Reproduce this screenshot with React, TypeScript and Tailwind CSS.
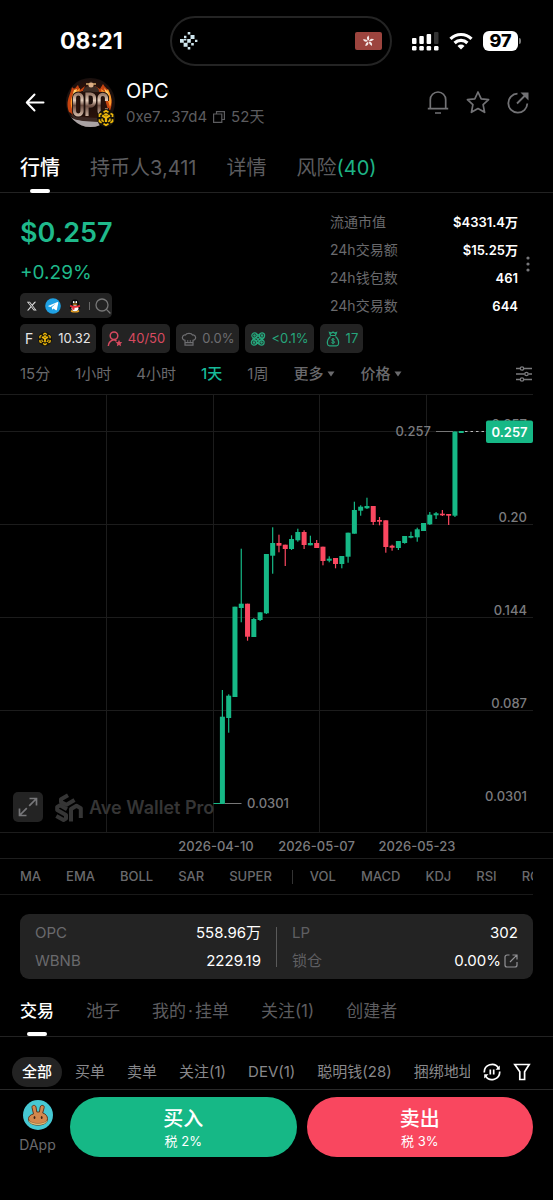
import type { ReactNode } from 'react';

type Tone = 'up' | 'down';
// tone, high, body top, body bottom, low
type Candle = [Tone, number, number, number, number];

const candles: Candle[] = [
  ['up', 690, 716.7, 804, 804],
  ['up', 694.3, 695.7, 718, 732.7],
  ['up', 606.7, 606.7, 697, 697],
  ['up', 548.7, 603.7, 608, 622.3],
  ['down', 603.7, 603.7, 636.7, 640.7],
  ['up', 618, 619, 637, 637],
  ['up', 612.3, 612.3, 620, 621],
  ['up', 554, 554, 613.3, 614],
  ['up', 527.3, 543, 555.7, 573.7],
  ['down', 534.7, 543, 545.7, 552.3],
  ['down', 544.7, 544.7, 549, 566],
  ['up', 535.3, 539, 549, 550],
  ['up', 528.7, 532, 540.3, 541.7],
  ['down', 530.3, 532, 545, 549],
  ['up', 535.7, 543, 545.3, 545.3],
  ['down', 540, 543, 548, 548],
  ['down', 546.7, 546.7, 561, 565.3],
  ['up', 556.3, 558.7, 560.7, 562.3],
  ['down', 558, 558, 564, 568.3],
  ['up', 556, 556, 564, 568.3],
  ['up', 532.7, 532.7, 556.7, 562.7],
  ['up', 501.7, 510, 533.7, 533.7],
  ['up', 505.3, 506.7, 510.7, 515.7],
  ['up', 497.7, 506, 508.3, 509],
  ['down', 506, 506, 522, 525],
  ['down', 517, 520, 521.7, 525.3],
  ['down', 520.3, 520.3, 547, 552.7],
  ['down', 544.7, 545.7, 547.7, 550.7],
  ['up', 541, 541, 548, 550],
  ['up', 536, 536, 543, 543.7],
  ['up', 531.7, 536, 537.7, 538.3],
  ['up', 527.7, 529.3, 537.3, 541.7],
  ['up', 523, 523, 531, 531],
  ['up', 512, 514.7, 524.3, 525],
  ['up', 512, 513.3, 515.3, 519],
  ['down', 510, 513.7, 515.3, 516],
  ['down', 514, 514, 515.7, 525],
  ['up', 431.5, 431.5, 515.7, 517],
  ['up', 431, 431, 433, 433],
];

const toneColor = { up: '#16b886', down: '#fb4760' };

function Chart() {
  return (
    <svg viewBox="0 394 553 464" className="block w-full" role="img" aria-label="OPC" fontFamily="Inter, sans-serif" fontSize="13" fontWeight="500">
      <g stroke="#1c1c1c" strokeWidth="1">
        {[394.5, 431.5, 524.5, 617.5, 710.5].map((y) => (
          <line key={y} x1="0" x2="533" y1={y} y2={y} />
        ))}
        <line x1="0" x2="553" y1="832.5" y2="832.5" />
        {[106.5, 213.5, 319.5, 426.5].map((x) => (
          <line key={x} x1={x} x2={x} y1="394" y2="832" />
        ))}
      </g>
      <g fill="#353535">
        <g stroke="#353535" strokeWidth="4" fill="none" strokeLinejoin="round">
          <path d="M68 795.300L61 799.300v2.800l5.500 2.600 8-4.700" />
          <path d="M67 809.300L60 805.300l-2.800 1.600v3.200l8.800 4.900v3.600l-2.500 1.500-7.200-4" />
          <path d="M71 821.500V809l5.500-3.300 4.300 2.500V818" />
        </g>
        <text x="89" y="814" fontSize="18" fontWeight="600">Ave Wallet Pro</text>
      </g>
      {candles.map(([tone, high, top, bottom, low], i) => {
        const x = 222.4 + i * 6.285;
        return (
          <g key={i} fill={toneColor[tone]}>
            <rect x={x - 0.6} y={high} width="1.2" height={low - high} />
            <rect x={x - 2.5} y={top} width="5" height={bottom - top} />
          </g>
        );
      })}
      <path d="M213.500 803.500h7" stroke="#16b886" />
      <path d="M225 803.500h16.500M436 431.500h17" stroke="#777" />
      <path d="M465 431.500h22" stroke="#bbb" strokeDasharray="2.500 3" />
      <g fill="#7b7b7e">
        <text x="247" y="808">0.0301</text>
        <text x="395.500" y="436">0.257</text>
        <g textAnchor="end">
          <text x="527" y="429">0.257</text>
          <text x="527" y="522">0.20</text>
          <text x="527" y="615">0.144</text>
          <text x="527" y="708">0.087</text>
          <text x="527" y="801">0.0301</text>
        </g>
        <g textAnchor="middle">
          <text x="216" y="851">2026-04-10</text>
          <text x="316.500" y="851">2026-05-07</text>
          <text x="417" y="851">2026-05-23</text>
        </g>
      </g>
      <rect x="486" y="420.500" width="47" height="22.500" rx="2" fill="#16b886" />
      <text x="509.500" y="437" textAnchor="middle" fill="#fff" fontWeight="600">0.257</text>
    </svg>
  );
}

function BnbMark({ className }: { className: string }) {
  return (
    <svg viewBox="0 0 16 16" className={className} aria-hidden="true">
      <circle cx="8" cy="8" r="8" fill="#15130b" />
      <g fill="none" stroke="#efb90b" strokeWidth="1.500">
        <path d="M5.800 2.800L8 1.500l2.200 1.300M12 3.900l1.800 1v2.300M13.800 9v2.200l-1.900 1.100M10.200 13.200L8 14.500l-2.200-1.300M4.100 12.300l-1.900-1.100V9M2.200 7.200V4.900L4 3.900" />
        <path d="M4.600 5.800L8 7.700l3.400-1.900M8 7.700v3.900" strokeWidth="2" />
        <path d="M8 3.700l2 1.200-2 1.100-2-1.100z" fill="#efb90b" strokeWidth=".4" />
        <path d="M4.500 8.500v1.700l1.600 1M11.500 8.500v1.700l-1.600 1" strokeWidth="1.300" />
      </g>
    </svg>
  );
}

function Avatar() {
  return (
    <div className="relative size-[49px] shrink-0">
      <svg viewBox="0 0 49 49" className="size-full" aria-hidden="true">
        <defs>
          <clipPath id="coin"><circle cx="24.500" cy="24.500" r="24.500" /></clipPath>
          <linearGradient id="steel" x1="0" x2="0" y1="0" y2="1">
            <stop offset="0" stopColor="#9b7c6b" />
            <stop offset=".3" stopColor="#e4cdbb" />
            <stop offset=".55" stopColor="#6a4b3f" />
            <stop offset="1" stopColor="#cbb1a0" />
          </linearGradient>
          <radialGradient id="glow">
            <stop offset="0" stopColor="#1b0d09" />
            <stop offset=".7" stopColor="#2b120b" />
            <stop offset="1" stopColor="#19100e" />
          </radialGradient>
        </defs>
        <g clipPath="url(#coin)">
          <rect width="49" height="49" fill="url(#glow)" />
          <path d="M3 34C-1 24 4 18 6 9c3 3 3 1 6-2l2 5 5-4-2 5 14 0-2-5 5 3 3-5c2 4 5 4 6 9 3 6 4 12 0 20l-3-10-2-10-8-2H16l-8 4-2 10 2 12-3-4z" fill="#c5430f" />
          <path d="M6 31c-3-8 0-12 2-18 2 1 5-2 6-3l-1 5-5 4-1 9zM35 11l4 3 3-3c3 6 5 12 2 18l-3-9-5-5z" fill="#ff9a2a" />
          <path d="M8 12l3-1-1 4-4 5zM38 10l4 4 1 5-3-4z" fill="#ffd06a" />
          <path d="M5 37l5-2 6 4 16 1 7 4-5 6H15z" fill="#3b2823" />
          <path d="M3 38c5 4 9 4 14 5l15 1 3 7H14z" fill="#aaa3a4" />
          <path d="M17 14c0-4 3-5 5-6 0-6 6-6 6 0 3 1 5 2 5 6z" fill="#3d2c24" />
          <path d="M20 5h10v2H20z" fill="#a98352" />
          <circle cx="25" cy="7" r="2.500" fill="#dcae86" />
          <g fill="none" strokeWidth="5" stroke="#1d0f0b">
            <rect x="8.500" y="16" width="7.500" height="21" rx="3.700" />
            <path d="M21 38V16h3.500a4 4 0 0 1 4 4v4a4 4 0 0 1-4 4H21" />
            <path d="M40.500 23v-3a3.700 3.700 0 0 0-7.400 0v13a3.700 3.700 0 0 0 7.400 0v-3" />
          </g>
          <g fill="none" strokeWidth="3.200" stroke="url(#steel)">
            <rect x="8.500" y="16" width="7.500" height="21" rx="3.700" />
            <path d="M21 38V16h3.500a4 4 0 0 1 4 4v4a4 4 0 0 1-4 4H21" />
            <path d="M40.500 23v-3a3.700 3.700 0 0 0-7.400 0v13a3.700 3.700 0 0 0 7.400 0v-3" />
          </g>
        </g>
      </svg>
      <BnbMark className="absolute right-0 bottom-0 size-[18px]" />
    </div>
  );
}

function StatusBar() {
  return (
    <div className="flex h-[66px] items-end pr-8 pl-[60px]">
      <div className="flex h-[50px] flex-1 items-center text-[23px] font-bold">08:21</div>
      <div className="flex h-[50px] w-[222px] items-center justify-between rounded-full border-2 border-[#242424] px-2">
        <svg viewBox="0 0 18 18" className="size-[18px]" fill="#cfe6ee" aria-hidden="true">
          <path d="M7.700 0h2.600v2.600H7.700zM4 3.800h2.400v2.400H4zM10.500 2.900h4v4h-4zM0 7h3.800v3.800H0zM7.200 7h3.600v3.800H7.200zM15 7.700h2.400v2.400H15zM3.600 10.800h4v4h-4zM11.200 11h2.600v2.600h-2.600zM7.700 15h2.600v2.600H7.700zM4 7h2.400v1.600H4z" />
        </svg>
        <svg viewBox="0 0 27 18" className="h-[18px] w-[27px]" aria-hidden="true">
          <rect width="27" height="18" rx="2" fill="#9c443e" />
          <g fill="#f5e9e8">
            {[0, 72, 144, 216, 288].map((a) => (
              <path key={a} d="M13.500 8.600c-2-1.200-2.200-4 .3-5.200-.5 1.500 1.400 2.500-.3 5.200z" transform={`rotate(${a} 13.500 9.200)`} />
            ))}
          </g>
        </svg>
      </div>
      <div className="ml-5 flex h-[50px] items-center gap-[10px]">
        <svg viewBox="0 0 27 19" className="h-[19px] w-[27px]" fill="#fff" aria-hidden="true">
          <rect x="0" y="6" width="4.500" height="6" rx="1" />
          <rect x="7.300" y="4" width="4.500" height="8" rx="1" />
          <rect x="14.600" y="2" width="4.500" height="10" rx="1" />
          <rect x="22" y="0" width="4.500" height="12" rx="1" fill="#333" />
          <rect x="0" y="14" width="4.500" height="4.500" rx="1.200" />
          <rect x="7.300" y="14" width="4.500" height="4.500" rx="1.200" />
          <rect x="14.600" y="14" width="4.500" height="4.500" rx="1.200" />
          <rect x="22" y="14" width="4.500" height="4.500" rx="1.200" />
        </svg>
        <svg viewBox="0 0 24 18" className="h-[18px] w-6" fill="none" stroke="#fff" strokeWidth="3.200" aria-hidden="true">
          <path d="M1.500 6.800a15 15 0 0 1 21 0M5.600 11a9.200 9.200 0 0 1 12.800 0" />
          <path d="M8.500 14a5 5 0 0 1 7 0L12 17.600z" fill="#fff" stroke="none" />
        </svg>
        <div className="flex items-center gap-px">
          <div className="flex h-5 w-[35px] items-center justify-center rounded-md bg-white text-lg leading-5 font-extrabold text-black">97</div>
          <div className="h-[6px] w-[2px] rounded-r-full bg-[#777]" />
        </div>
      </div>
    </div>
  );
}

function Header() {
  return (
    <header className="flex h-[73px] items-center pr-[23px] pl-6">
      <button aria-label="Back" className="mr-[18px]">
        <svg viewBox="0 0 24 24" className="size-6" fill="none" stroke="#fff" strokeWidth="2" strokeLinejoin="round" strokeLinecap="round">
          <path d="M19.500 11.500H3M10.500 3.500L2.800 11.500l7.700 8" />
        </svg>
      </button>
      <Avatar />
      <div className="ml-[11px] flex-1">
        <h1 className="text-xl leading-7">OPC</h1>
        <div className="flex items-center gap-[6px] text-[15px] leading-6 text-[#5c5c5f]">
          <span>0xe7...37d4</span>
          <button aria-label="Copy">
            <svg viewBox="0 0 12 12" className="size-3" fill="none" stroke="currentColor" strokeWidth="1.200">
              <path d="M3.500 3V.6h7.900v7.900H9M.6 3h8.200v8.400H.6z" />
            </svg>
          </button>
          <span>52天</span>
        </div>
      </div>
      <div className="flex items-center gap-4 text-[#727275]">
        <button aria-label="Alerts">
          <svg viewBox="0 0 24 24" className="size-6" fill="none" stroke="currentColor" strokeWidth="1.700">
            <path d="M4.300 17.700V8.700a7.700 7.700 0 0 1 15.400 0v9M1.800 17.700h20.400M9 22h6" />
          </svg>
        </button>
        <button aria-label="Favourite">
          <svg viewBox="0 0 24 24" className="size-6" fill="none" stroke="currentColor" strokeWidth="1.700" strokeLinejoin="round">
            <path d="M12 1l3.200 6.800 7.400.9-5.500 5 1.500 7.600-6.600-3.800-6.600 3.800 1.500-7.600-5.500-5 7.400-.9z" />
          </svg>
        </button>
        <button aria-label="Share">
          <svg viewBox="0 0 24 24" className="size-6" fill="none" stroke="currentColor" strokeWidth="1.800">
            <path d="M11.500 2.700A9.500 9.500 0 1 0 21.300 12.500M11 12.500L19 4.500" />
            <path d="M14.500 1.500h8v8z" fill="currentColor" stroke="none" />
          </svg>
        </button>
      </div>
    </header>
  );
}

function TopTabs() {
  return (
    <nav className="flex h-[54px] items-stretch gap-[30px] border-b border-[#222] px-5 text-xl text-[#5c5c5f]">
      <button className="relative pt-1 font-medium text-white">
        行情
        <span className="absolute -bottom-px left-1/2 h-1 w-5 -translate-x-1/2 rounded-sm bg-white" />
      </button>
      <button className="pt-1">持币人3,411</button>
      <button className="pt-1">详情</button>
      <button className="pt-1">风险<span className="text-[#1eb385]">(40)</span></button>
    </nav>
  );
}

const stats = [
  ['流通市值', '$4331.4万'],
  ['24h交易额', '$15.25万'],
  ['24h钱包数', '461'],
  ['24h交易数', '644'],
];

function Socials() {
  return (
    <div className="flex h-[25px] w-[92px] items-center gap-2 rounded-[5px] bg-[#232323] pr-1 pl-[7px]">
      <a href="#x" aria-label="X">
        <svg viewBox="0 0 24 24" className="size-[10px]" fill="#ddd">
          <path d="M18.200 1.500h3.700l-8 9.200L23.300 22.500H16l-5.800-7.500-6.600 7.500H0l8.600-9.800L-.5 1.500H7l5.200 6.900zM17 20.300h2L5.800 3.600H3.600z" />
        </svg>
      </a>
      <a href="#telegram" aria-label="Telegram">
        <svg viewBox="0 0 16 16" className="size-4">
          <circle cx="8" cy="8" r="7.800" fill="#1fa1e4" />
          <path d="M3 7.900l9.600-3.900c.5-.1.800.2.700.8l-1.500 7.100c-.1.500-.5.600-.9.300L8.500 10.500l-1.200 1.200-.6-2.500 4.200-3.700-5.400 3.400-2.300-.7c-.5-.2-.5-.2-.2-.3z" fill="#fff" />
        </svg>
      </a>
      <a href="#qq" aria-label="QQ">
        <svg viewBox="0 0 14 16" className="h-4 w-3">
          <ellipse cx="7" cy="14" rx="5" ry="1.600" fill="#eca01c" />
          <path d="M7 .5c3.500 0 4.500 2.500 4.500 5.500 1 1.500 2 3.500 1.500 5.500-.5.500-1-.5-1.500-1-1 3-2 3.500-4.500 3.500S3.500 13.500 2.500 10.500c-.5.500-1 1.500-1.500 1C.500 9.500 1.500 7.500 2.500 6 2.500 3 3.500.5 7 .5z" fill="#080808" />
          <ellipse cx="7" cy="10.700" rx="4" ry="3.500" fill="#fff" />
          <ellipse cx="5.500" cy="3.600" rx="1" ry="1.300" fill="#fff" /><ellipse cx="8.500" cy="3.600" rx="1" ry="1.300" fill="#fff" />
          <ellipse cx="7" cy="5.800" rx="3" ry=".8" fill="#eca01c" />
          <path d="M1.500 6.500c3.500 2 7.500 2 11 0l.5 2.300c-2 1-4.500 1.200-6.500 1.200l-.2 2.500H3.700l.2-2.600-2.800-1z" fill="#e42b35" />
        </svg>
      </a>
      <div className="flex items-center gap-[5px]">
        <span className="h-2 w-px bg-[#666]" />
        <button aria-label="Search">
          <svg viewBox="0 0 16 16" className="size-4" fill="none" stroke="#777" strokeWidth="1.300" strokeLinecap="round">
            <circle cx="7" cy="7" r="6" /><path d="M11.400 11.400l3.600 3.600" />
          </svg>
        </button>
      </div>
    </div>
  );
}

function Chip({ children, tone }: { children: ReactNode; tone: string }) {
  return (
    <button className={`flex h-[29px] items-center gap-[5px] rounded-[5px] bg-[#232323] px-[5px] text-[13px] whitespace-nowrap ${tone}`}>
      {children}
    </button>
  );
}

function Overview() {
  return (
    <section className="px-5 pt-[15px]">
      <div className="flex justify-between">
        <div>
          <div className="text-[27px] leading-[50px] font-semibold text-[#1fb98b]">$0.257</div>
          <div className="mb-[5px] text-[19px] leading-[30px] text-[#1fb98b]">+0.29%</div>
          <Socials />
        </div>
        <div className="flex items-center gap-2">
          <dl className="w-[188px] leading-7">
            {stats.map(([label, value]) => (
              <div key={label} className="flex justify-between">
                <dt className="text-sm leading-7 text-[#6a6a6d]">{label}</dt>
                <dd className="text-[13px] leading-7 font-semibold text-white">{value}</dd>
              </div>
            ))}
          </dl>
          <button aria-label="More" className="mr-[3px]">
            <svg viewBox="0 0 4 16" className="h-4 w-1" fill="#77777a">
              <circle cx="2" cy="2" r="1.600" /><circle cx="2" cy="8" r="1.600" /><circle cx="2" cy="14" r="1.600" />
            </svg>
          </button>
        </div>
      </div>
      <div className="mt-1 flex gap-[6px]">
        <Chip tone="text-[#e6e6e6]">
          <span className="text-sm">F</span> <BnbMark className="size-[14px]" /> <span className="ml-px">10.32</span>
        </Chip>
        <Chip tone="text-[#d84a60]">
          <svg viewBox="0 0 16 16" className="size-4" fill="none" stroke="currentColor" strokeWidth="1.500" aria-hidden="true">
            <circle cx="7" cy="4.700" r="3.800" /><path d="M1.300 15c.2-3.500 2-5.500 5.500-6.300M7 8.500l2.500 1.600" />
            <path d="M12 8.800l1 2.100 2.300.3-1.700 1.600.4 2.400-2-1.200-2.100 1.200.4-2.400-1.700-1.600 2.400-.3z" fill="currentColor" stroke="none" />
          </svg>
          40/50
        </Chip>
        <Chip tone="text-[#6e6e71]">
          <svg viewBox="0 0 16 16" className="size-4" fill="none" stroke="currentColor" strokeWidth="1.200" aria-hidden="true">
            <path d="M4 14.200V9.300C1.500 9 .8 6.800 1.800 5.200c.7-1 1.800-1.400 2.700-1.200C5.500 1.800 10.500 1.800 11.500 4c.9-.2 2 .2 2.700 1.200 1 1.600.3 3.800-2.200 4.100v4.900zM4 11.700h8M6.700 9.300v1.500M9.300 9.300v1.500" />
          </svg>
          0.0%
        </Chip>
        <Chip tone="text-[#26a67c]">
          <svg viewBox="0 0 16 16" className="size-4" fill="none" stroke="currentColor" strokeWidth="1.200" aria-hidden="true">
            <g transform="rotate(8 8 8)">
              <circle cx="4" cy="5" r="2.600" /><circle cx="4" cy="5" r=".7" />
              <circle cx="4.500" cy="12" r="2.600" /><circle cx="4.500" cy="12" r=".7" />
              <circle cx="11.500" cy="4" r="2.600" /><circle cx="11.500" cy="4" r=".7" />
              <circle cx="12" cy="11" r="2.600" /><circle cx="12" cy="11" r=".7" />
              <path d="M5.500 2.800l8 6.200M2.500 7.500l8 6M2.500 10L10 2M6.500 13.800L14 5.700M6 6.800l4 3.200M6.500 10.200L10 6" />
            </g>
          </svg>
          &lt;0.1%
        </Chip>
        <Chip tone="text-[#26a67c]">
          <svg viewBox="0 0 16 16" className="size-4" fill="none" stroke="currentColor" strokeWidth="1.200" aria-hidden="true">
            <path d="M5.500 4.200L4.500 1.500l2 .6L8 1l1.500 1.100 2-.6-1 2.700M5.300 4.500h5.400M5.500 5.500C3 7.500 2 10 2.500 13c.2 1.300 1 1.800 2.200 1.800h6.600c1.200 0 2-.5 2.200-1.800.5-3-.5-5.500-3-7.500" />
            <path d="M9.600 8.400c-.5-.8-3-.9-3 .5s3 .8 3 2.200-2.500 1.300-3.200.4M8 7v6.200" strokeWidth="1" />
          </svg>
          17
        </Chip>
      </div>
    </section>
  );
}

function Caret() {
  return (
    <svg viewBox="0 0 8 6" className="h-[6px] w-2" fill="currentColor" aria-hidden="true"><path d="M.5.5h7L4 5.500z" /></svg>
  );
}

function Timeframes() {
  return (
    <div className="flex h-[41px] items-center gap-[25px] px-5 pt-px text-[15px] whitespace-nowrap text-[#6a6a6d]">
      <button>15分</button>
      <button>1小时</button>
      <button>4小时</button>
      <button className="font-medium text-[#17b999]">1天</button>
      <button>1周</button>
      <button className="flex items-center gap-1 font-medium">更多 <Caret /></button>
      <button className="flex items-center gap-1 font-medium">价格 <Caret /></button>
      <button aria-label="Settings" className="ml-auto">
        <svg viewBox="0 0 18 16" className="h-4 w-[18px]" fill="none" stroke="#7b7b7e" strokeWidth="1.300">
          <path d="M1 2.500h4M9 2.500h8M1 8h8.500M13.500 8H17M1 13.500h4M9 13.500h8" />
          <circle cx="7" cy="2.500" r="1.700" /><circle cx="11.500" cy="8" r="1.700" /><circle cx="7" cy="13.500" r="1.700" />
        </svg>
      </button>
    </div>
  );
}

function Indicators() {
  return (
    <div className="border-t border-[#1e1e1e]">
      <div className="mr-5 flex h-9 items-center gap-[25px] overflow-hidden border-b border-[#191919] pt-px pl-5 text-[13px] font-medium whitespace-nowrap text-[#6a6a6d]">
        {['MA', 'EMA', 'BOLL', 'SAR', 'SUPER'].map((n) => <button key={n}>{n}</button>)}
        <span className="-mr-2 -ml-[5px] h-[14px] w-px shrink-0 bg-[#333]" />
        {['VOL', 'MACD', 'KDJ', 'RSI', 'ROC'].map((n) => <button key={n}>{n}</button>)}
      </div>
    </div>
  );
}

function PoolCard() {
  return (
    <section className="mx-5 mt-[19px] flex h-[65px] items-center gap-[15px] rounded-[9px] bg-[#232323] px-[15px] text-[15px] leading-7">
      <dl className="flex-1">
        <div className="flex justify-between"><dt className="text-[#6a6a6d]">OPC</dt><dd>558.96万</dd></div>
        <div className="flex justify-between"><dt className="text-[#6a6a6d]">WBNB</dt><dd>2229.19</dd></div>
      </dl>
      <span className="h-10 w-px bg-[#5a5a5a]" />
      <dl className="flex-1">
        <div className="flex justify-between"><dt className="text-[#5f5f62]">LP</dt><dd>302</dd></div>
        <div className="flex justify-between">
          <dt className="text-[#5f5f62]">锁仓</dt>
          <dd className="flex items-center gap-[3px]">
            0.00%
            <a href="#lock" aria-label="Lock details">
              <svg viewBox="0 0 14 14" className="size-[14px]" fill="none" stroke="#929295" strokeWidth="1.200">
                <path d="M5.500 1H3a2 2 0 0 0-2 2v8a2 2 0 0 0 2 2h8a2 2 0 0 0 2-2V8M8.500 1H13v4.500M12.800 1.200L6 8" />
              </svg>
            </a>
          </dd>
        </div>
      </dl>
    </section>
  );
}

function BottomTabs() {
  return (
    <nav className="flex h-[58px] items-stretch gap-8 border-b border-[#222] px-5 pt-[9px] text-[17px] whitespace-nowrap text-[#5c5c5f]">
      <button className="relative font-medium text-white">
        交易
        <span className="absolute bottom-0 left-1/2 h-1 w-5 -translate-x-1/2 rounded-sm bg-white" />
      </button>
      <button>池子</button>
      <button>我的<span className="mx-[2px]">·</span>挂单</button>
      <button>关注(1)</button>
      <button>创建者</button>
    </nav>
  );
}

function Filters() {
  return (
    <div className="flex h-[53px] items-end gap-[13px] border-b border-[#292929] pr-[22px] pb-[2px] pl-3">
      <div className="flex min-w-0 flex-1 items-center gap-[22px] overflow-hidden text-[15px] whitespace-nowrap text-[#88888b]">
        <button className="-mr-[9px] h-[30px] shrink-0 rounded-full bg-[#232323] px-[10px] font-medium text-white">全部</button>
        {['买单', '卖单', '关注(1)', 'DEV(1)', '聪明钱(28)', '捆绑地址'].map((n) => <button key={n}>{n}</button>)}
      </div>
      <div className="flex h-[30px] items-center gap-3">
        <button aria-label="Pause updates">
          <svg viewBox="0 0 18 18" className="size-[18px]" fill="none" stroke="#fff" strokeWidth="1.700">
            <path d="M1.300 9.500A7.700 7.700 0 0 1 15.500 5M16.700 8.500A7.700 7.700 0 0 1 2.500 13M7.300 6.500v5M10.700 6.500v5" />
            <path d="M16.800 2.500v4.300h-4.300zM1.200 15.500v-4.300h4.300z" fill="#fff" stroke="none" />
          </svg>
        </button>
        <button aria-label="Filter">
          <svg viewBox="0 0 18 18" className="size-[18px]" fill="none" stroke="#fff" strokeWidth="1.700">
            <path d="M1.800 1.500h14.400l-4.600 7.300v7.700H6.800V8.800z" />
          </svg>
        </button>
      </div>
    </div>
  );
}

function TradeBar() {
  return (
    <footer className="flex items-start gap-[10px] pt-[7px] pr-5 pl-[14px] text-white">
      <a href="#dapp" className="-mr-px flex w-[47px] flex-col items-center pt-[3px] text-sm leading-[30px] text-[#6a6a6d]">
        <svg viewBox="0 0 30 30" className="size-[30px]" aria-hidden="true">
          <circle cx="15" cy="15" r="15" fill="#46c8d3" />
          <g stroke="#5f3820" strokeWidth="1">
            <path d="M10.500 14L9 7.500C8.500 5 12.500 4.500 13 7l.8 5h2.600l.8-5c.5-2.500 4.500-2 4 .5L19.700 13c3.300 1 4.800 3.300 4.800 5.700 0 4-4 6.300-9.500 6.300s-9.500-2.300-9.500-6.300c0-2.200 1.800-3.900 5-4.700z" fill="#d2884e" />
            <path d="M5.600 19.500c1.500 3 5 4 9.400 4s8-1 9.400-4c0 3.700-4 5.500-9.400 5.500s-9.400-1.800-9.400-5.500z" fill="#fadc8d" strokeWidth=".4" />
          </g>
          <ellipse cx="11.500" cy="17.500" rx=".9" ry="1.600" fill="#3d2415" /><ellipse cx="18.700" cy="17.500" rx=".9" ry="1.600" fill="#3d2415" />
        </svg>
        DApp
      </a>
      <button className="flex h-[60px] flex-1 flex-col items-center justify-center rounded-full bg-[#16b886] pt-1">
        <span className="text-xl leading-6 font-medium">买入</span>
        <span className="text-[13px] leading-5">税 2%</span>
      </button>
      <button className="flex h-[60px] flex-1 flex-col items-center justify-center rounded-full bg-[#f9475f] pt-1">
        <span className="text-xl leading-6 font-medium">卖出</span>
        <span className="text-[13px] leading-5">税 3%</span>
      </button>
    </footer>
  );
}

export default function App() {
  return (
    <div className="min-h-screen bg-black font-['Inter','Noto_Sans_CJK_SC',sans-serif] text-white">
      <StatusBar />
      <Header />
      <TopTabs />
      <Overview />
      <Timeframes />
      <div className="relative">
        <Chart />
        <button aria-label="Full screen" className="absolute bottom-9 left-[13px] flex size-[30px] items-center justify-center rounded-[5px] bg-[#232323]">
          <svg viewBox="0 0 20 20" className="size-5" fill="none" stroke="#77777a" strokeWidth="1.700">
            <path d="M11.500 1.500h7v7M18 2l-6.800 6.800M8.500 18.500h-7v-7M2 18l6.800-6.800" />
          </svg>
        </button>
      </div>
      <Indicators />
      <PoolCard />
      <BottomTabs />
      <Filters />
      <TradeBar />
    </div>
  );
}
